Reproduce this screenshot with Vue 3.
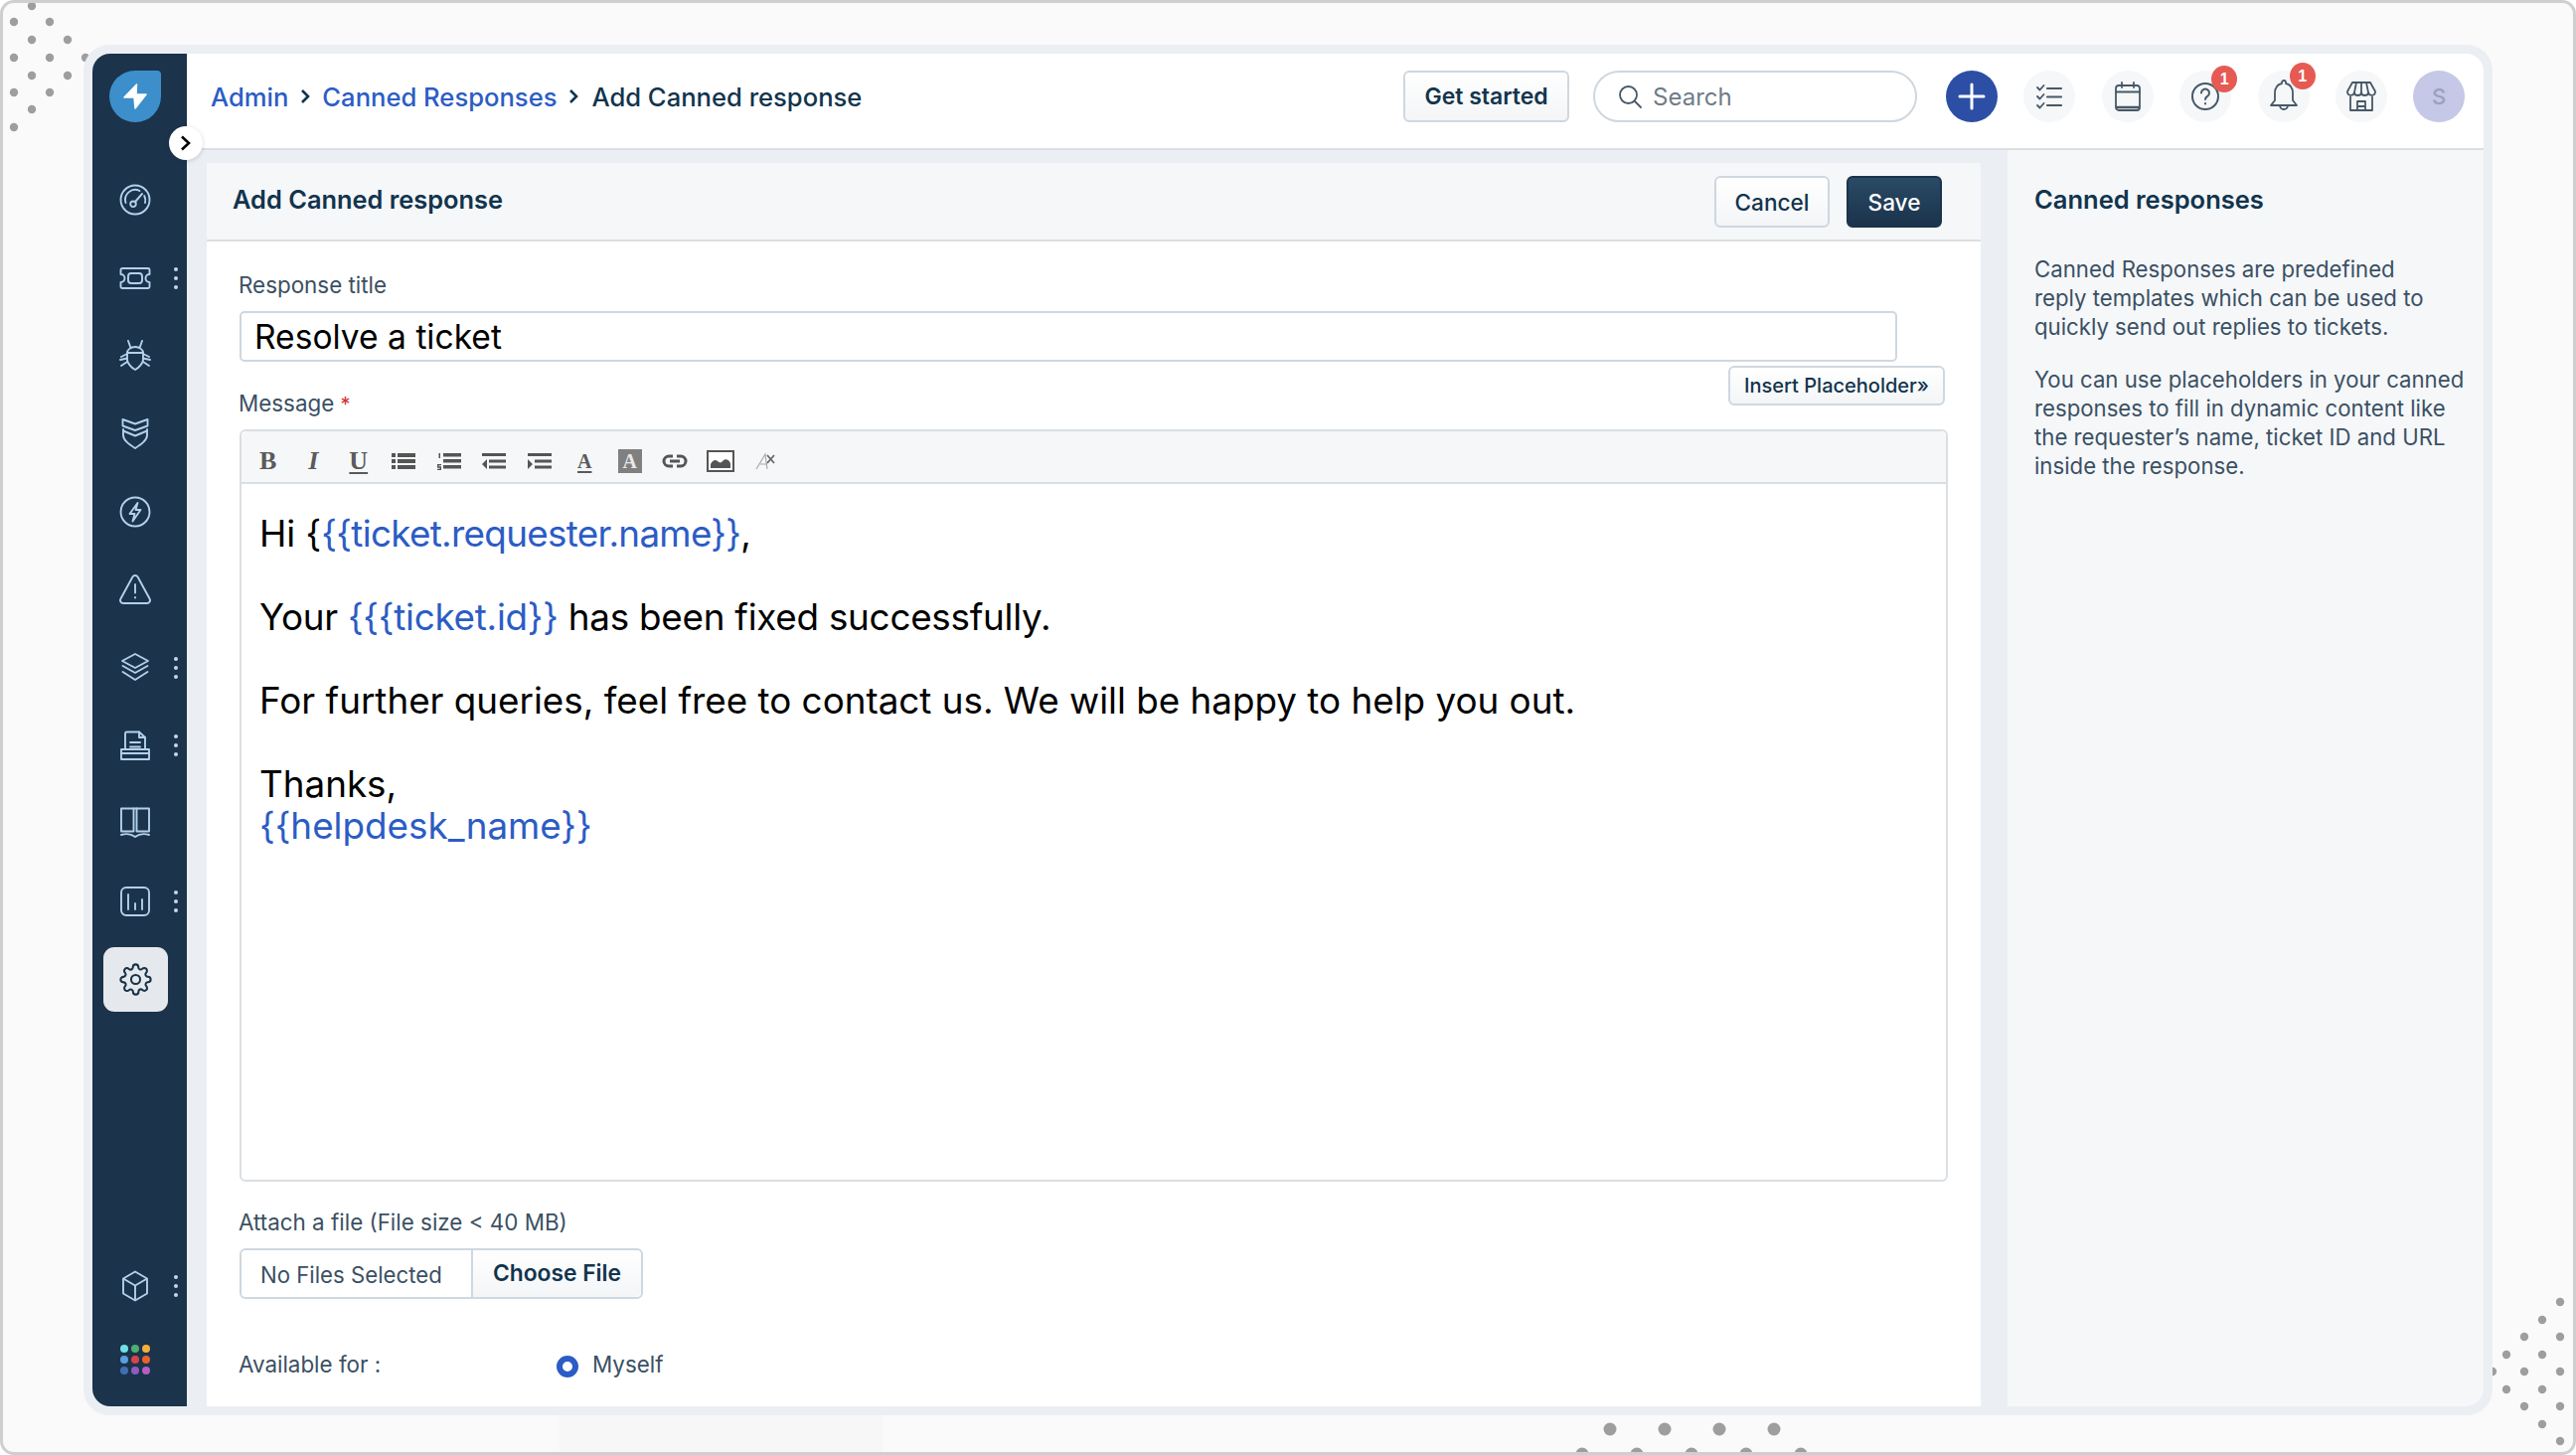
<script setup>
import { ref } from 'vue';

const title = ref('Resolve a ticket');
const search = ref('');

const bg = [
  [32,6],[14,22],[50,22],[32,40],[68,40],[14,58],[50,58],[86,58],[32,76],[68,76],[14,93],[50,93],[32,110],[14,128],
  [2576,1310],[2558,1328],[2540,1345],[2576,1345],[2522,1363],[2558,1363],[2508,1380],[2540,1380],[2576,1380],
  [2522,1398],[2558,1398],[2540,1415],[2576,1415],[2558,1433],[2576,1450]
];
const bottomDots = [[1620,1438],[1675,1438],[1730,1438],[1785,1438],[1592,1463],[1647,1463],[1702,1463],[1757,1463],[1812,1463]];

const gear = 'M19.4 15a1.65 1.65 0 0 0 .33 1.82l.06.06a2 2 0 0 1 0 2.83 2 2 0 0 1-2.83 0l-.06-.06a1.65 1.65 0 0 0-1.82-.33 1.65 1.65 0 0 0-1 1.51V21a2 2 0 0 1-2 2 2 2 0 0 1-2-2v-.09A1.65 1.65 0 0 0 9 19.4a1.65 1.65 0 0 0-1.82.33l-.06.06a2 2 0 0 1-2.83 0 2 2 0 0 1 0-2.83l.06-.06a1.65 1.65 0 0 0 .33-1.82 1.65 1.65 0 0 0-1.51-1H3a2 2 0 0 1-2-2 2 2 0 0 1 2-2h.09A1.65 1.65 0 0 0 4.6 9a1.65 1.65 0 0 0-.33-1.82l-.06-.06a2 2 0 0 1 0-2.83 2 2 0 0 1 2.83 0l.06.06a1.65 1.65 0 0 0 1.82.33H9a1.65 1.65 0 0 0 1-1.51V3a2 2 0 0 1 2-2 2 2 0 0 1 2 2v.09a1.65 1.65 0 0 0 1 1.51 1.65 1.65 0 0 0 1.82-.33l.06-.06a2 2 0 0 1 2.83 0 2 2 0 0 1 0 2.83l-.06.06a1.65 1.65 0 0 0-.33 1.82V9a1.65 1.65 0 0 0 1.51 1H21a2 2 0 0 1 2 2 2 2 0 0 1-2 2h-.09a1.65 1.65 0 0 0-1.51 1z';

const navTop = [
  { d: ['M16 1.5a14.5 14.5 0 1 1 0 29a14.5 14.5 0 1 1 0-29z', 'M6.5 19a10 10 0 0 1 14-12', 'M25.2 12a10 10 0 0 1 .8 7', 'M16 18l7-8', 'M14 17.5a2.8 2.8 0 1 1 0 5.6a2.8 2.8 0 1 1 0-5.6z'] },
  { d: ['M3 6h26a1.5 1.5 0 0 1 1.5 1.5V12a4 4 0 0 0 0 8v4.5A1.5 1.5 0 0 1 29 26H3a1.5 1.5 0 0 1-1.5-1.5V20a4 4 0 0 0 0-8V7.5A1.5 1.5 0 0 1 3 6z', 'M12 11h8a3 3 0 0 1 3 3v4a3 3 0 0 1-3 3h-8a3 3 0 0 1-3-3v-4a3 3 0 0 1 3-3z'], more: true },
  { d: ['M16 7c-4.5 0-8 3-8 6v7c0 3 4 8 8 10 4-2 8-7 8-10v-7c0-3-3.5-6-8-6z', 'M8 13h16', 'M9 1l2.5 7', 'M23 1l-2.5 7', 'M8 14l-6 3', 'M8 18.5l-7 1.5', 'M8 22l-6 4', 'M24 14l6 3', 'M24 18.5l7 1.5', 'M24 22l6 4'] },
  { d: ['M3.5 2l12.5 4.5L28.5 2v6.5L16 13 3.5 8.5z', 'M4 12v6c0 5 6 9 12 13 6-4 12-8 12-13v-6', 'M4 13.5l12 5 12-5'] },
  { d: ['M16 1.5a14.5 14.5 0 1 1 0 29a14.5 14.5 0 1 1 0-29z', 'M18.5 7l-8 11h5l-2 7.5 8-11.5h-5z'] },
  { d: ['M16 2a3 3 0 0 1 2.6 1.5l12 22A3 3 0 0 1 28 30H4a3 3 0 0 1-2.6-4.5l12-22A3 3 0 0 1 16 2z', 'M16 11v8.5', 'M16 24v.5'] },
  { d: ['M16 2l13 7-13 7-13-7z', 'M3.5 14l12.5 7 12.5-7', 'M3.5 20l12.5 8 12.5-8'], more: true },
  { d: ['M6 20V4a1.5 1.5 0 0 1 1.5-1.5H20L26 8v12', 'M20 2.5V8h6', 'M11 13h10', 'M11 17.5h10', 'M2 20h28v10H2z', 'M2 24h28'], more: true },
  { d: ['M2 1.5h12.5v23H2z', 'M17.5 1.5H30v23H17.5z', 'M14.5 1.5h3', 'M2 28c5-1.5 10-1 14 2 4-3 9-3.5 14-2'] },
  { d: ['M7 2h18a5 5 0 0 1 5 5v18a5 5 0 0 1-5 5H7a5 5 0 0 1-5-5V7a5 5 0 0 1 5-5z', 'M9 9v15', 'M16 18v6', 'M23 14v10'], more: true }
];

const appColors = ['#6fe0e6', '#4caf6e', '#f4b13a', '#5a9fe0', '#d9434a', '#e8632b', '#3f6fb0', '#8e5bc0', '#b45fc4'];
</script>

<template>
  <div class="frame">
    <svg class="dots" width="2592" height="1464" viewBox="0 0 2592 1464">
      <circle v-for="(p, i) in bg" :key="i" :cx="p[0]" :cy="p[1]" r="4.2" fill="#9e9e9e" />
      <circle v-for="(p, i) in bottomDots" :key="'b' + i" :cx="p[0]" :cy="p[1]" r="6.5" fill="#9e9e9e" />
    </svg>
    <div class="floor-shape"></div>

    <div class="window">
      <aside class="sidebar">
        <div class="logo">
          <svg width="52" height="52" viewBox="0 0 52 52">
            <path d="M26 0h22a4 4 0 0 1 4 4v22a26 26 0 1 1-26-26z" fill="#3d8fcb" />
            <path d="M27.5 14L15 27h10l1 11 11-14H27z" fill="#fff" stroke="#fff" stroke-width="1.5" stroke-linejoin="round" />
          </svg>
        </div>
        <button class="toggle">
          <svg width="18" height="18" viewBox="0 0 18 18" fill="none" stroke="#000" stroke-width="2.6"><path d="M5 2.5l7 6.5-7 6.5" /></svg>
        </button>

        <nav class="nav">
          <div v-for="(item, i) in navTop" :key="i" class="nav-item">
            <svg width="32" height="32" viewBox="0 0 32 32" fill="none" stroke="#b3d0ec" stroke-width="1.9" stroke-linecap="round" stroke-linejoin="round">
              <path v-for="(d, j) in item.d" :key="j" :d="d" />
            </svg>
            <span v-if="item.more" class="kebab"><i></i><i></i><i></i></span>
          </div>
          <div class="nav-item">
            <div class="tile">
              <svg width="33" height="33" viewBox="0 0 24 24" fill="none" stroke="#183247" stroke-width="1.5" stroke-linecap="round" stroke-linejoin="round">
                <circle cx="12" cy="12" r="3.3" />
                <path :d="gear" />
              </svg>
            </div>
          </div>
        </nav>

        <div class="nav-bottom">
          <div class="nav-item">
            <svg width="32" height="32" viewBox="0 0 32 32" fill="none" stroke="#b3d0ec" stroke-width="1.9" stroke-linejoin="round">
              <path d="M16 1.5L28 8.5v15L16 30.5 4 23.5v-15z" />
              <path d="M4 8.5l12 7 12-7" />
              <path d="M16 15.5v15" />
            </svg>
            <span class="kebab"><i></i><i></i><i></i></span>
          </div>
          <div class="apps">
            <i v-for="c in appColors" :key="c" :style="{ background: c }"></i>
          </div>
        </div>
      </aside>

      <div class="main">
        <header class="topbar">
          <div class="crumbs">
            <a>Admin</a>
            <svg width="14" height="18" viewBox="0 0 14 18" fill="none" stroke="#12344d" stroke-width="2.6"><path d="M4 3l6 6-6 6" /></svg>
            <a>Canned Responses</a>
            <svg width="14" height="18" viewBox="0 0 14 18" fill="none" stroke="#12344d" stroke-width="2.6"><path d="M4 3l6 6-6 6" /></svg>
            <span>Add Canned response</span>
          </div>
          <button class="btn started">Get started</button>
          <div class="search">
            <svg width="26" height="26" viewBox="0 0 26 26" fill="none" stroke="#475867" stroke-width="1.8" stroke-linecap="round"><circle cx="11.5" cy="11.5" r="8.5" /><path d="M18 18l6 6" /></svg>
            <input v-model="search" type="text" placeholder="Search" />
          </div>
          <button class="circle plus">
            <svg width="30" height="30" viewBox="0 0 30 30" stroke="#fff" stroke-width="3" stroke-linecap="round"><path d="M15 3v24M3 15h24" /></svg>
          </button>
          <button class="circle">
            <svg width="28" height="28" viewBox="0 0 28 28" fill="none" stroke="#475867" stroke-width="1.8" stroke-linecap="round" stroke-linejoin="round">
              <path d="M2 5l2.5 2.5L8.5 3M2 14l2.5 2.5L8.5 12M2 23l2.5 2.5L8.5 21" />
              <path d="M12 6h14M12 14.5h14M12 23h14" stroke-width="2.2" />
            </svg>
          </button>
          <button class="circle">
            <svg width="28" height="30" viewBox="0 0 28 30" fill="none" stroke="#475867" stroke-width="1.8" stroke-linecap="round">
              <path d="M5 4h18a3 3 0 0 1 3 3v19a3 3 0 0 1-3 3H5a3 3 0 0 1-3-3V7a3 3 0 0 1 3-3z" />
              <path d="M2 10.5h24M8 1v5M20 1v5" />
              <path d="M3 26h22" stroke-width="2.4" />
            </svg>
          </button>
          <button class="circle">
            <svg width="30" height="30" viewBox="0 0 30 30" fill="none" stroke="#475867" stroke-width="2" stroke-linecap="round">
              <circle cx="15" cy="15" r="13" />
              <path d="M11 11.5a4 4 0 1 1 6 3.5c-1.5.8-2 1.5-2 3" />
              <path d="M15 22v.5" />
            </svg>
            <span class="badge help">1</span>
          </button>
          <button class="circle">
            <svg width="30" height="36" viewBox="0 0 30 36" fill="none" stroke="#475867" stroke-width="1.8" stroke-linejoin="round">
              <path d="M15 2a2 2 0 0 1 2 2v1c5 1 7 5 7 10v7l4 5H2l4-5v-7c0-5 2-9 7-10V4a2 2 0 0 1 2-2z" />
              <path d="M11 27a4 4 0 0 0 8 0" />
            </svg>
            <span class="badge bell">1</span>
          </button>
          <button class="circle">
            <svg width="32" height="32" viewBox="0 0 32 32" fill="none" stroke="#475867" stroke-width="1.8" stroke-linejoin="round">
              <path d="M7 2h18l5 9c0 5-6 5-7 1 0 4-7 4-7 0 0 4-7 4-7 0-1 4-7 4-7-1z" />
              <path d="M11 2L9 12M21 2l2 10M16 2v10" />
              <path d="M5 16v14h22V16" />
              <path d="M12 30v-9h8v9" />
              <path d="M12 26h8" />
            </svg>
          </button>
          <div class="avatar">S</div>
        </header>

        <div class="body">
          <section class="card">
            <div class="card-head">
              <h2>Add Canned response</h2>
              <div class="actions">
                <button class="btn cancel">Cancel</button>
                <button class="btn save">Save</button>
              </div>
            </div>

            <div class="form">
              <label class="label first">Response title</label>
              <input v-model="title" class="title-input" type="text" />

              <div class="msg-row">
                <label class="label">Message <em>*</em></label>
                <button class="btn insert">Insert Placeholder»</button>
              </div>

              <div class="editor">
                <div class="toolbar">
                  <span class="tool t-b">B</span>
                  <span class="tool t-i">I</span>
                  <span class="tool t-u">U</span>
                  <span class="tool">
                    <svg width="24" height="18" viewBox="0 0 24 18" fill="#555"><path d="M0 1h4v4H0zM6 1h18v4H6zM0 7h4v4H0zM6 7h18v4H6zM0 13h4v4H0zM6 13h18v4H6z" /></svg>
                  </span>
                  <span class="tool">
                    <svg width="24" height="18" viewBox="0 0 24 18" fill="#555"><path d="M6 1h18v3.5H6zM6 7h18v3.5H6zM6 13h18v3.5H6zM1.5 1H3v5H1.5zM0 12h4v1.2H1.5v1H4V18H0v-1.2h2.5v-1H0z" /></svg>
                  </span>
                  <span class="tool">
                    <svg width="24" height="18" viewBox="0 0 24 18" fill="#555"><path d="M0 1h24v3H0zM7 7.5h17v3H7zM7 13.5h17v3H7zM5 7v10L0 12z" /></svg>
                  </span>
                  <span class="tool">
                    <svg width="24" height="18" viewBox="0 0 24 18" fill="#555"><path d="M0 1h24v3H0zM7 7.5h17v3H7zM7 13.5h17v3H7zM0 7v10l5-5z" /></svg>
                  </span>
                  <span class="tool t-color">A</span>
                  <span class="tool"><span class="t-bg">A</span></span>
                  <span class="tool">
                    <svg width="26" height="16" viewBox="0 0 26 16" fill="none" stroke="#555" stroke-width="3"><path d="M11 3H7a5 5 0 0 0 0 10h4M15 3h4a5 5 0 0 1 0 10h-4M8 8h10" /></svg>
                  </span>
                  <span class="tool">
                    <svg width="28" height="22" viewBox="0 0 28 22"><rect x="1" y="1" width="26" height="20" fill="#fff" stroke="#555" stroke-width="2" /><path d="M4 18v-4c2-4 5-5 7-3 2 2 4 2 6-1 3-2 7 1 7 4v4z" fill="#555" /></svg>
                  </span>
                  <span class="tool">
                    <svg width="22" height="20" viewBox="0 0 22 20" fill="none"><path d="M2 18L11 3l2 15M6 13h7" stroke="#aaa" stroke-width="1.2" /><path d="M13 4l7 8M20 4l-7 8" stroke="#666" stroke-width="1.8" /></svg>
                  </span>
                </div>
                <div class="content">
                  <p>Hi {<b v-pre class="tight">{{ticket.requester.name}}</b>,</p>
                  <p class="blank"></p>
                  <p class="snug">Your <b v-pre>{{{ticket.id}}</b> has been fixed successfully.</p>
                  <p class="blank"></p>
                  <p>For further queries, feel free to contact us. We will be happy to help you out.</p>
                  <p class="blank"></p>
                  <p>Thanks,</p>
                  <p><b v-pre>{{helpdesk_name}}</b></p>
                </div>
              </div>

              <label class="label attach">Attach a file (File size &lt; 40 MB)</label>
              <div class="file">
                <span class="file-name">No Files Selected</span>
                <span class="file-btn">Choose File</span>
              </div>

              <div class="avail">
                <label class="label">Available for :</label>
                <span class="radio"></span>
                <label class="label">Myself</label>
              </div>
            </div>
          </section>

          <aside class="help-panel">
            <h3>Canned responses</h3>
            <p>Canned Responses are predefined<br />reply templates which can be used to<br />quickly send out replies to tickets.</p>
            <p>You can use placeholders in your canned<br />responses to fill in dynamic content like<br />the requester’s name, ticket ID and URL<br />inside the response.</p>
          </aside>
        </div>
      </div>
    </div>
  </div>
</template>

<style>
html, body { margin: 0; padding: 0; }
</style>

<style scoped>
* { box-sizing: border-box; }

.frame {
  position: relative;
  width: 2592px;
  height: 1464px;
  overflow: hidden;
  padding: 42px 0 0 81px;
  background: #fafafa;
  border: 3px solid #cfcfcf;
  border-radius: 14px;
  font-family: Inter, "Liberation Sans", sans-serif;
  color: #12344d;
}
.dots {
  position: absolute;
  left: -3px;
  top: -3px;
}
.floor-shape {
  position: absolute;
  left: 559px;
  top: 1400px;
  width: 326px;
  height: 80px;
  background: #f7f7f7;
  border-radius: 0 0 30px 30px;
}

.window {
  position: relative;
  display: flex;
  width: 2424px;
  height: 1379px;
  padding: 9px;
  background: #ebeef3;
  border-radius: 26px;
}

.sidebar {
  position: relative;
  display: flex;
  flex-direction: column;
  width: 95px;
  flex-shrink: 0;
  background: #1b334b;
  border-radius: 18px 0 0 18px;
}
.logo {
  height: 52px;
  margin: 17px 0 0 17px;
}
.toggle {
  position: absolute;
  left: 77px;
  top: 73px;
  z-index: 2;
  display: flex;
  align-items: center;
  justify-content: center;
  width: 34px;
  height: 34px;
  padding: 0;
  background: #fff;
  border: none;
  border-radius: 50%;
  box-shadow: 0 1px 4px rgba(18, 52, 77, 0.2);
}
.nav {
  margin-top: 39px;
}
.nav-item {
  position: relative;
  display: flex;
  align-items: center;
  justify-content: center;
  width: 86px;
  height: 78.4px;
}
.kebab {
  position: absolute;
  left: 82px;
  top: 50%;
  display: flex;
  flex-direction: column;
  gap: 5px;
  transform: translateY(-50%);
}
.kebab i {
  display: block;
  width: 4px;
  height: 4px;
  background: #c5d8ea;
  border-radius: 50%;
}
.tile {
  display: flex;
  align-items: center;
  justify-content: center;
  width: 65px;
  height: 65px;
  flex-shrink: 0;
  background: #e5e9ed;
  border-radius: 11px;
}
.nav-bottom {
  margin-top: auto;
  padding-bottom: 32px;
}
.apps {
  display: grid;
  grid-template-columns: repeat(3, 8px);
  gap: 3px;
  width: 30px;
  margin: 20px 0 0 28px;
}
.apps i {
  width: 8px;
  height: 8px;
  border-radius: 50%;
}

.main {
  display: flex;
  flex-direction: column;
  flex: 1;
  min-width: 0;
}
.topbar {
  display: flex;
  align-items: center;
  height: 97px;
  flex-shrink: 0;
  padding: 0 19px 9px 24px;
  background: #fff;
  border-bottom: 2px solid #dadfe3;
  border-radius: 0 18px 0 0;
}
.crumbs {
  display: flex;
  align-items: center;
  gap: 10px;
  margin-right: auto;
  font-size: 25.6px;
  font-weight: 500;
}
.crumbs a { color: #2c5cc5; }
.crumbs span { margin-left: 1px; }

.btn {
  font-family: inherit;
  font-weight: 600;
  color: #12344d;
  background: linear-gradient(#fff, #f3f5f7);
  border: 2px solid #cfd7df;
  border-radius: 6px;
}
.started {
  width: 167px;
  height: 52px;
  font-size: 23px;
}
.search {
  display: flex;
  align-items: center;
  gap: 10px;
  width: 326px;
  height: 52px;
  margin-left: 24px;
  padding: 0 22px;
  background: #fff;
  border: 2px solid #cfd7df;
  border-radius: 26px;
}
.search input {
  width: 200px;
  padding: 0;
  font-family: inherit;
  font-size: 24px;
  color: #475867;
  border: none;
  outline: none;
}
.search input::placeholder { color: #6f7c87; opacity: 1; }
.circle {
  position: relative;
  display: flex;
  align-items: center;
  justify-content: center;
  width: 52px;
  height: 52px;
  margin-left: 26.4px;
  padding: 0;
  background: #f5f7f9;
  border: none;
  border-radius: 50%;
}
.plus {
  margin-left: 29px;
  background: #2c4fa5;
}
.badge {
  position: absolute;
  width: 26px;
  height: 27px;
  font-family: inherit;
  font-size: 16px;
  font-weight: 600;
  line-height: 27px;
  text-align: center;
  color: #fff;
  background: #e65a54;
  border-radius: 50%;
}
.help { left: 32px; top: -5px; }
.bell { left: 32px; top: -8px; }
.avatar {
  width: 52px;
  height: 52px;
  margin-left: 26px;
  font-size: 22px;
  font-weight: 500;
  line-height: 52px;
  text-align: center;
  color: #9aa0c0;
  background: #c5c8e6;
  border-radius: 50%;
}

.body {
  display: flex;
  flex: 1;
  min-height: 0;
}
.card {
  display: flex;
  flex-direction: column;
  width: 1785px;
  margin: 13px 0 0 20px;
  overflow: hidden;
  background: #fff;
}
.card-head {
  display: flex;
  align-items: center;
  justify-content: space-between;
  height: 79px;
  flex-shrink: 0;
  padding: 0 39px 0 26px;
  background: #f5f7f9;
  border-bottom: 2px solid #dadfe3;
}
.card-head h2 {
  margin: 0 0 5px;
  font-size: 25.4px;
  font-weight: 600;
}
.actions {
  display: flex;
  gap: 17px;
}
.cancel {
  width: 116px;
  height: 52px;
  padding-top: 3px;
  font-size: 22.6px;
  font-weight: 500;
}
.save {
  width: 96px;
  height: 52px;
  padding-top: 3px;
  font-size: 22.6px;
  font-weight: 500;
  color: #fff;
  background: linear-gradient(#2a4a66, #1b334b);
  border-color: #1b334b;
}

.form {
  padding: 0 33px;
}
.label {
  display: block;
  margin-left: -1px;
  font-size: 22.4px;
  line-height: 28px;
  color: #3b5063;
}
.label em {
  font-style: normal;
  font-size: 20px;
  color: #d72d30;
}
.first {
  margin-top: 30px;
}
.title-input {
  display: block;
  width: 1668px;
  height: 51px;
  margin-top: 12px;
  padding: 0 13px;
  font-family: inherit;
  font-size: 33.6px;
  color: #000;
  background: #fff;
  border: 2px solid #cfd7df;
  border-radius: 5px;
  outline: none;
}
.msg-row {
  display: flex;
  justify-content: space-between;
  height: 64px;
  margin-top: 4px;
  padding-right: 3px;
}
.msg-row .label {
  align-self: flex-end;
  margin-bottom: 11px;
}
.insert {
  width: 218px;
  height: 40px;
  font-size: 20px;
  font-weight: 500;
}

.editor {
  display: flex;
  flex-direction: column;
  width: 1719px;
  height: 757px;
  border: 2px solid #dadfe3;
  border-radius: 6px;
}
.toolbar {
  display: flex;
  align-items: center;
  height: 53px;
  flex-shrink: 0;
  padding: 9px 0 0 4px;
  background: #f5f7f9;
  border-bottom: 2px solid #dadfe3;
  border-radius: 6px 6px 0 0;
}
.tool {
  display: flex;
  align-items: center;
  justify-content: center;
  width: 45.5px;
  font-family: "Liberation Serif", serif;
  font-size: 26px;
  line-height: 26px;
  color: #5a5a5a;
}
.t-b { font-weight: 700; }
.t-i { font-style: italic; font-weight: 700; }
.t-u {
  font-weight: 700;
  text-decoration: underline;
  text-underline-offset: 3px;
}
.t-color {
  font-size: 20px;
  font-weight: 700;
  text-decoration: underline;
  text-underline-offset: 3px;
}
.t-bg {
  width: 24px;
  height: 24px;
  font-size: 20px;
  font-weight: 700;
  line-height: 25px;
  text-align: center;
  color: #e8e8e8;
  background: #808080;
}
.content {
  flex: 1;
  padding: 29px 18px 0;
  font-size: 36.8px;
  line-height: 42px;
  color: #000;
}
.content p {
  margin: 0;
  min-height: 42px;
}
.content b {
  font-weight: 400;
  color: #2c5cc5;
}
.content .tight {
  letter-spacing: -0.68px;
}
.content .snug {
  letter-spacing: -0.25px;
}

.attach {
  margin-top: 27px;
}
.file {
  display: flex;
  width: 406px;
  height: 51px;
  margin-top: 12px;
  border: 2px solid #cfd7df;
  border-radius: 6px;
}
.file-name {
  width: 233px;
  padding-left: 19px;
  font-size: 22.2px;
  line-height: 49px;
  color: #3b5063;
  border-right: 2px solid #cfd7df;
}
.file-btn {
  flex: 1;
  font-size: 22.8px;
  font-weight: 600;
  line-height: 45px;
  text-align: center;
  background: linear-gradient(#fff, #f3f5f7);
  border-radius: 0 6px 6px 0;
}
.avail {
  display: flex;
  align-items: center;
  margin-top: 52px;
}
.avail .label:first-child {
  width: 320px;
}
.radio {
  width: 22px;
  height: 22px;
  margin: 3px 15px 0 0;
  background: #fff;
  border: 6px solid #2c5cc5;
  border-radius: 50%;
}

.help-panel {
  flex: 1;
  margin-left: 27px;
  padding: 0 10px 0 27px;
  background: #f5f7f9;
  border-radius: 0 0 18px 0;
}
.help-panel h3 {
  margin: 34px 0 39px;
  font-size: 25.5px;
  line-height: 32px;
  font-weight: 600;
}
.help-panel p {
  margin: 0 0 24px;
  font-size: 22.2px;
  line-height: 29px;
  color: #3b5063;
}
</style>
